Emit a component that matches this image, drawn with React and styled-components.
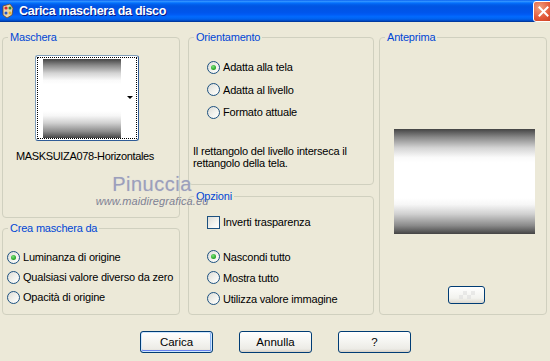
import React from "react";
import styled, { createGlobalStyle, css } from "styled-components";

const Global = createGlobalStyle`
html, body {
  margin: 0;
  overflow: hidden;
  background: #ECE9D8;
}
body {
  font-family: "Liberation Sans", Arial, sans-serif;
  font-size: 11px;
  letter-spacing: -0.2px;
  color: #000;
}
`

const Window = styled.div`
position: relative;
width: 550px;
height: 361px;
background: #ECE9D8;
overflow: hidden;
`
const TitleBar = styled.div`
height: 22px;
display: flex;
align-items: center;
padding-left: 1px;
background: linear-gradient(to bottom, #0058EE 0%, #3593FF 5%, #288EFF 8%, #127DFF 11%, #036FFC 14%, #0262EE 19%, #0057E5 26%, #0054E3 32%, #0055EB 56%, #005BF5 66%, #026AFE 76%, #0062EF 86%, #0052D6 92%, #0040AB 96%, #003092 100%);
`
const Title = styled.span`
flex: 1;
margin-left: 4px;
color: #fff;
font-weight: bold;
font-size: 12.5px;
letter-spacing: -0.3px;
text-shadow: 1px 1px 0 #0A1883;
`
const CloseBtn = styled.div`
width: 21px;
height: 21px;
margin-right: -4px;
box-sizing: border-box;
border: 1px solid #fff;
border-radius: 3px;
background: radial-gradient(circle at 30% 30%, #F0A080, #E2593A 55%, #C83A1C);
display: flex;
align-items: center;
justify-content: center;
`
const Content = styled.div`
display: flex;
padding: 9px 0 0 2px;
`
const Column = styled.div`
display: flex;
flex-direction: column;
width: ${p => p.$w}px;
margin: ${p => p.$m || 0};
gap: ${p => p.$gap || 0}px;
`
const Group = styled.fieldset`
margin: 0;
padding: 0;
box-sizing: border-box;
height: ${p => p.$h}px;
border: 1px solid #D0D0BF;
border-radius: 4px;
min-width: 0;
`
const Legend = styled.legend`
color: #0046D5;
padding: 0 2px;
margin-left: 5px;
line-height: 13px;
`
const Inner = styled.div`
display: flex;
flex-direction: column;
padding: ${p => p.$pad};
`
const Thumb = styled.div`
width: 104px;
height: 86px;
margin-left: 32px;
margin-top: 11px;
box-sizing: border-box;
border: 1px solid #2F5C97;
border-top-color: #7F9DB9;
border-left-color: #7F9DB9;
border-radius: 3px;
background: #fff;
padding: 1px;
`
const Focus = styled.div`
position: relative;
height: 100%;
box-sizing: border-box;
border: 1px dotted #000;
padding: 1px 0 0 5px;
`
const maskGradient = css`
background: linear-gradient(to bottom, #444 0%, #8a8a8a 8%, #d4d4d4 18%, #fafafa 27%, #fff 32%, #fff 66%, #f6f6f6 72%, #d0d0d0 81%, #8a8a8a 92%, #444 100%);
`
const MaskImage = styled.div`
width: ${p => p.$w}px;
height: ${p => p.$h}px;
margin: ${p => p.$m || 0};
${maskGradient}
`
const Arrow = styled.span`
position: absolute;
right: 3px;
top: 38px;
width: 0;
height: 0;
border-left: 3px solid transparent;
border-right: 3px solid transparent;
border-top: 3px solid #000;
`
const MaskName = styled.div`
margin: 9px 0 0 13px;
line-height: 13px;
font-size: 11px;
letter-spacing: -0.35px;
`
const Option = styled.label`
display: flex;
align-items: center;
height: ${p => p.$h || 20}px;
gap: 3px;
white-space: nowrap;
`
const Radio = styled.span`
position: relative;
flex: none;
width: 13px;
height: 13px;
box-sizing: border-box;
border-radius: 50%;
border: 1px solid #1C5180;
background: linear-gradient(135deg, #DCDCD7 0%, #F4F4F0 60%, #fff 100%);
${p => p.$checked && css`
&::after {
  content: "";
  position: absolute;
  left: 3px;
  top: 3px;
  width: 5px;
  height: 5px;
  border-radius: 50%;
  background: radial-gradient(circle at 40% 35%, #7BE37A, #21A121 70%, #178A17);
}
`}
`
const Check = styled.span`
flex: none;
width: 13px;
height: 13px;
box-sizing: border-box;
border: 1px solid #1C5180;
background: linear-gradient(135deg, #DCDCD7 0%, #F4F4F0 60%, #fff 100%);
`
const Note = styled.p`
margin: ${p => p.$m};
line-height: 12px;
`
const Spacer = styled.div`
height: ${p => p.$h}px;
`
const PreviewBtn = styled.div`
width: 37px;
height: 18px;
box-sizing: border-box;
margin: 52px 0 0 68px;
border: 1px solid #003C74;
border-radius: 3px;
background: linear-gradient(#fff, #F2F2EE 70%, #DCD8CE);
display: flex;
align-items: center;
justify-content: center;
`
const Checker = styled.span`
width: 16px;
height: 8px;
opacity: 0.55;
background:
  linear-gradient(45deg, #ddd 25%, transparent 25%, transparent 75%, #ddd 75%),
  linear-gradient(45deg, #ddd 25%, transparent 25%, transparent 75%, #ddd 75%);
background-size: 8px 8px;
background-position: 0 0, 4px 4px;
`
const ButtonRow = styled.div`
display: flex;
justify-content: center;
gap: 26px;
margin-top: 16px;
padding-left: 1px;
`
const Button = styled.button`
width: 73px;
height: 22px;
padding: 0;
box-sizing: border-box;
font-family: "Liberation Sans", Arial, sans-serif;
font-size: 11.5px;
color: #000;
border: 1px solid #003C74;
border-radius: 3px;
background: linear-gradient(#fff 0%, #F4F4F0 50%, #ECEBE6 85%, #D6D0C5 100%);
${p => p.$default && css`
box-shadow: inset 0 0 0 1px #CEE7FF, inset 0 -1px 0 1px #6982EE, inset -1px 0 0 1px #8BB3F4;
`}
`
const Watermark = styled.div`
position: absolute;
left: 99px;
top: 173px;
display: flex;
flex-direction: column;
align-items: center;
width: 106px;
pointer-events: none;
`
const WmName = styled.span`
font-size: 20px;
line-height: 22px;
color: #9C9FBA;
letter-spacing: 0.5px;
text-shadow: 0 0 1px #C8CADB;
`
const WmSite = styled.span`
font-size: 11px;
line-height: 12px;
color: #7E8194;
font-style: italic;
letter-spacing: 0.1px;
`

const AppIcon = () => (
  <svg width="14" height="16" viewBox="0 0 14 16">
    <path d="M2 3 L9 1 L12 5 L11 12 L6 15 L2 12 Z" fill="#E8D4A8" stroke="#6B4A2A" strokeWidth="0.8" />
    <circle cx="5" cy="5" r="1.6" fill="#D8282A" />
    <circle cx="9" cy="5" r="1.5" fill="#2A8C2A" />
    <circle cx="5" cy="10" r="1.5" fill="#2456C8" />
    <circle cx="9" cy="10" r="1.4" fill="#E8B020" />
  </svg>
)

const XIcon = () => (
  <svg width="11" height="11" viewBox="0 0 11 11">
    <path d="M1.5 1.5 L9.5 9.5 M9.5 1.5 L1.5 9.5" stroke="#fff" strokeWidth="2" strokeLinecap="square" />
  </svg>
)

const RadioOption = ({ checked, h, children }) => (
  <Option $h={h}>
    <Radio $checked={checked} />
    {children}
  </Option>
)

export default function App() {
  return (
    <Window>
      <Global />
      <TitleBar>
        <AppIcon />
        <Title>Carica maschera da disco</Title>
        <CloseBtn><XIcon /></CloseBtn>
      </TitleBar>

      <Content>
        <Column $w={178} $gap={4}>
          <Group $h={187}>
            <Legend>Maschera</Legend>
            <Thumb>
              <Focus>
                <MaskImage $w={78} $h={79} />
                <Arrow />
              </Focus>
            </Thumb>
            <MaskName>MASKSUIZA078-Horizontales</MaskName>
          </Group>
          <Group $h={93}>
            <Legend>Crea maschera da</Legend>
            <Inner $pad="12px 0 0 4px">
              <RadioOption checked>Luminanza di origine</RadioOption>
              <RadioOption>Qualsiasi valore diverso da zero</RadioOption>
              <RadioOption>Opacità di origine</RadioOption>
            </Inner>
          </Group>
        </Column>

        <Column $w={186} $m="0 5px 0 8px" $gap={5}>
          <Group $h={154}>
            <Legend>Orientamento</Legend>
            <Inner $pad="12px 0 0 18px">
              <RadioOption checked h={22.5}>Adatta alla tela</RadioOption>
              <RadioOption h={22.5}>Adatta al livello</RadioOption>
              <RadioOption h={22.5}>Formato attuale</RadioOption>
            </Inner>
            <Note $m="21px 0 0 4px">
              Il rettangolo del livello interseca il<br />rettangolo della tela.
            </Note>
          </Group>
          <Group $h={125}>
            <Legend>Opzioni</Legend>
            <Inner $pad="9px 0 0 18px">
              <Option>
                <Check />
                Inverti trasparenza
              </Option>
              <Spacer $h={14} />
              <RadioOption checked h={21}>Nascondi tutto</RadioOption>
              <RadioOption h={21}>Mostra tutto</RadioOption>
              <RadioOption h={21}>Utilizza valore immagine</RadioOption>
            </Inner>
          </Group>
        </Column>

        <Column $w={168}>
          <Group $h={284}>
            <Legend>Anteprima</Legend>
            <MaskImage $w={141} $h={105} $m="85px 0 0 14px" />
            <PreviewBtn><Checker /></PreviewBtn>
          </Group>
        </Column>
      </Content>

      <ButtonRow>
        <Button $default>Carica</Button>
        <Button>Annulla</Button>
        <Button>?</Button>
      </ButtonRow>

      <Watermark>
        <WmName>Pinuccia</WmName>
        <WmSite>www.maidiregrafica.eu</WmSite>
      </Watermark>
    </Window>
  );
}
